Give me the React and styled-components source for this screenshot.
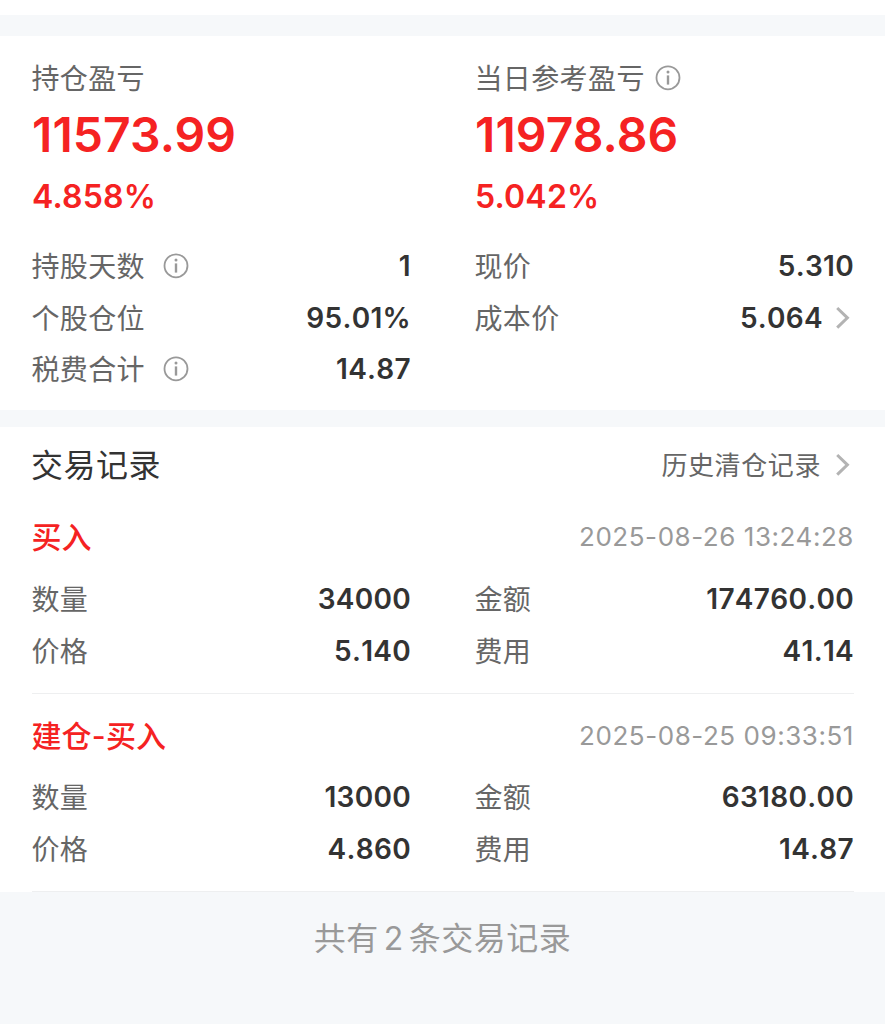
import React from "react";
import styled, { createGlobalStyle } from "styled-components";

const trades = [
  {
    type: "买入",
    time: "2025-08-26 13:24:28",
    cells: [
      ["数量", "34000"],
      ["金额", "174760.00"],
      ["价格", "5.140"],
      ["费用", "41.14"],
    ],
  },
  {
    type: "建仓-买入",
    time: "2025-08-25 09:33:51",
    cells: [
      ["数量", "13000"],
      ["金额", "63180.00"],
      ["价格", "4.860"],
      ["费用", "14.87"],
    ],
  },
];

//small round "i" shown after some labels
const InfoIcon = () => (
  <InfoSvg viewBox="0 0 26 26" fill="none">
    <circle cx="13" cy="12.8" r="11.5" stroke="#999" strokeWidth="1.8" />
    <circle cx="13" cy="7.1" r="1.5" fill="#999" />
    <path d="M13 10.4v9.2" stroke="#999" strokeWidth="2.4" />
  </InfoSvg>
);

const Arrow = () => (
  <ArrowSvg viewBox="0 0 16 24" fill="none">
    <path d="M2.2 2L12.4 11.8L2.2 21.6" stroke="#b3b3b3" strokeWidth="3" />
  </ArrowSvg>
);

//one label + value line
const Cell = ({ label, value, info, arrow }) => (
  <CellRow>
    <Label>{label}</Label>
    {info && <InfoIcon />}
    <Value>{value}</Value>
    {arrow && <Arrow />}
  </CellRow>
);

export default function App() {
  return (
    <>
      <GlobalStyle />
      <Page>
        <Strip $height={21} />
        <Summary>
          <Columns>
            <div>
              <ProfitTitle>
                <Label>持仓盈亏</Label>
              </ProfitTitle>
              <Profit>11573.99</Profit>
              <Percent>4.858%</Percent>
            </div>
            <div>
              <ProfitTitle>
                <Label>当日参考盈亏</Label>
                <InfoIcon />
              </ProfitTitle>
              <Profit>11978.86</Profit>
              <Percent>5.042%</Percent>
            </div>
          </Columns>
          <CellGrid>
            <Cell label="持股天数" value="1" info />
            <Cell label="现价" value="5.310" />
            <Cell label="个股仓位" value="95.01%" />
            <Cell label="成本价" value="5.064" arrow />
            <Cell label="税费合计" value="14.87" info />
          </CellGrid>
        </Summary>
        <Strip $height={17} />
        <Records>
          <RecordsHeader>
            <h2>交易记录</h2>
            <History>
              <span>历史清仓记录</span>
              <Arrow />
            </History>
          </RecordsHeader>
          {trades.map((trade) => (
            <Trade key={trade.time}>
              <TradeTop>
                <TradeType>{trade.type}</TradeType>
                <Time>{trade.time}</Time>
              </TradeTop>
              <CellGrid>
                {trade.cells.map(([label, value]) => (
                  <Cell key={label} label={label} value={value} />
                ))}
              </CellGrid>
            </Trade>
          ))}
        </Records>
        <Footer>
          共有<span>2</span>条交易记录
        </Footer>
      </Page>
    </>
  );
}

const GlobalStyle = createGlobalStyle`
  * {
    box-sizing: border-box;
  }
  body {
    margin: 0;
    background: #fff;
    color: #333;
    font-family: "Noto Sans CJK SC", sans-serif;
  }
`;

const Page = styled.div`
  width: 885px;
  height: 1024px;
  padding-top: 15px;
  display: flex;
  flex-direction: column;
  overflow: hidden;
`;

const Strip = styled.div`
  height: ${({ $height }) => $height}px;
  background: #f6f8fa;
`;

const Summary = styled.section`
  height: 374px;
  padding: 20px 31px 0 32px;
`;

const Columns = styled.div`
  display: grid;
  grid-template-columns: 379px 379px;
  column-gap: 64px;
  height: 184px;
`;

const CellGrid = styled(Columns)`
  grid-auto-rows: 51.8px;
  height: auto;
`;

const ProfitTitle = styled.div`
  display: flex;
  align-items: center;
  height: 44px;
  svg {
    margin-left: 10px;
  }
`;

const Label = styled.span`
  margin-left: -0.6px;
  padding-bottom: 2px;
  font-size: 28px;
  line-height: 42px;
  letter-spacing: 0.4px;
  color: #666;
`;

const Profit = styled.div`
  font-family: Inter, sans-serif;
  font-size: 48px;
  font-weight: 600;
  line-height: 70px;
  letter-spacing: 0.1px;
  color: #f52222;
`;

const Percent = styled.div`
  padding-top: 2px;
  font-family: Inter, sans-serif;
  font-size: 32px;
  font-weight: 600;
  line-height: 50px;
  letter-spacing: 0.2px;
  color: #f52222;
`;

const CellRow = styled.div`
  display: flex;
  align-items: center;
  svg {
    margin-left: 18px;
  }
`;

const Value = styled.span`
  margin-left: auto;
  font-family: Inter, sans-serif;
  font-size: 28px;
  font-weight: 600;
  font-kerning: none;
  letter-spacing: 0.3px;
`;

const InfoSvg = styled.svg`
  width: 26px;
  height: 26px;
`;

const ArrowSvg = styled.svg`
  width: 16px;
  height: 24px;
  && {
    margin: 0 3px 0 12px;
  }
`;

const Records = styled.section`
  height: 465px;
  padding: 0 31px 0 32px;
`;

const RecordsHeader = styled.div`
  display: flex;
  align-items: center;
  justify-content: space-between;
  height: 75px;
  h2 {
    margin: 0 0 0 -1px;
    padding-bottom: 4px;
    font-size: 32px;
    font-weight: 400;
    letter-spacing: 0.5px;
  }
`;

const History = styled.div`
  display: flex;
  align-items: center;
  font-size: 26px;
  letter-spacing: 0.6px;
  color: #666;
  span {
    margin-right: 2px;
    padding-bottom: 2px;
  }
`;

const Trade = styled.div`
  height: 192px;
  border-bottom: 1px solid #eeeff0;
  & + & {
    height: 198px;
    padding-top: 6.5px;
  }
`;

const TradeTop = styled.div`
  display: flex;
  align-items: center;
  justify-content: space-between;
  height: 71px;
`;

//Inter first so the dash in the type is taken from it
const TradeType = styled.div`
  margin-left: -0.6px;
  padding-bottom: 1px;
  font-family: Inter, "Noto Sans CJK SC", sans-serif;
  font-size: 30px;
  font-weight: 500;
  line-height: 44px;
  letter-spacing: 0.2px;
  color: #f52222;
`;

const Time = styled.div`
  padding-bottom: 1.5px;
  font-family: Inter, sans-serif;
  font-size: 26px;
  letter-spacing: 0.55px;
  color: #999;
`;

const Footer = styled.footer`
  flex: 1;
  padding-top: 20px;
  text-align: center;
  font-size: 32px;
  line-height: 48px;
  letter-spacing: 0.5px;
  color: #999;
  background: #f6f8fa;
  span {
    margin: 0 5px;
    font-family: Inter, sans-serif;
  }
`;
